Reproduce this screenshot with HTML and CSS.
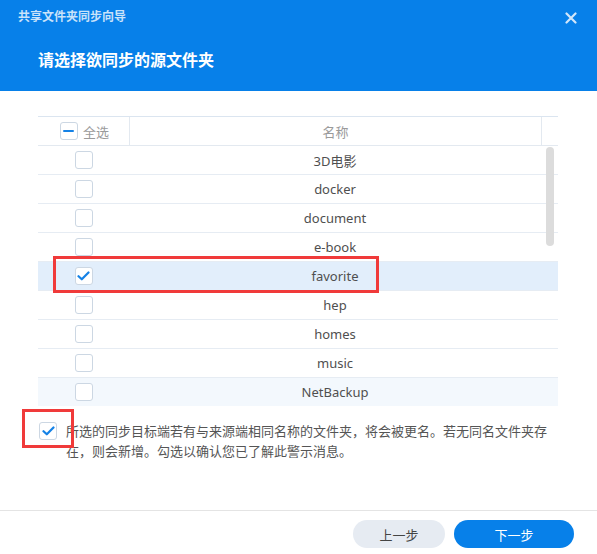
FILE: index.html
```html
<!DOCTYPE html>
<html lang="zh-CN">
<head>
  <meta charset="UTF-8" />
  <title>共享文件夹同步向导</title>
  <link rel="stylesheet" href="styles.css">
</head>
<body>
  <div class="dialog">
    <header class="wizard-head">
      <div class="top-bar">
        <span class="app-title">共享文件夹同步向导</span>
        <svg class="close" width="12" height="12" viewBox="0 0 12 12">
          <path d="M1.5 1.5L10.5 10.5M10.5 1.5L1.5 10.5" stroke="#d2e6fa" stroke-width="2.2" stroke-linecap="round"/>
        </svg>
      </div>
      <h1>请选择欲同步的源文件夹</h1>
    </header>

    <main class="content">
      <div class="grid">
        <div class="grid-head">
          <div class="cell sel-cell">
            <span class="box partial"><span class="dash"></span></span>
            <span class="sel-label">全选</span>
          </div>
          <div class="cell name-head">名称</div>
          <div class="cell gutter"></div>
        </div>
        <div class="grid-body">
          <div class="row"><div class="cell"><span class="box"></span></div><div class="cell name">3D电影</div><div></div></div>
          <div class="row"><div class="cell"><span class="box"></span></div><div class="cell name">docker</div><div></div></div>
          <div class="row"><div class="cell"><span class="box"></span></div><div class="cell name">document</div><div></div></div>
          <div class="row"><div class="cell"><span class="box"></span></div><div class="cell name">e-book</div><div></div></div>
          <div class="row selected">
            <div class="cell">
              <span class="box">
                <svg width="13" height="10" viewBox="0 0 13 10"><path d="M1.5 5.2L4.8 8.3L11.5 1.5" fill="none" stroke="#1582e6" stroke-width="2.2" stroke-linecap="round" stroke-linejoin="round"/></svg>
              </span>
            </div>
            <div class="cell name">favorite</div><div></div>
          </div>
          <div class="row"><div class="cell"><span class="box"></span></div><div class="cell name">hep</div><div></div></div>
          <div class="row"><div class="cell"><span class="box"></span></div><div class="cell name">homes</div><div></div></div>
          <div class="row"><div class="cell"><span class="box"></span></div><div class="cell name">music</div><div></div></div>
          <div class="row hover"><div class="cell"><span class="box"></span></div><div class="cell name">NetBackup</div><div></div></div>
          <div class="scrollbar"></div>
        </div>
      </div>

      <div class="notice">
        <span class="box">
          <svg width="13" height="10" viewBox="0 0 13 10"><path d="M1.5 5.2L4.8 8.3L11.5 1.5" fill="none" stroke="#1582e6" stroke-width="2.2" stroke-linecap="round" stroke-linejoin="round"/></svg>
        </span>
        <p>所选的同步目标端若有与来源端相同名称的文件夹，将会被更名。若无同名文件夹存在，则会新增。勾选以确认您已了解此警示消息。</p>
      </div>
    </main>

    <footer class="actions">
      <button class="btn btn-back">上一步</button>
      <button class="btn btn-next">下一步</button>
    </footer>

    <!-- annotation marks -->
    <div class="mark mark-row"></div>
    <div class="mark mark-check"></div>
  </div>
</body>
</html>
```

FILE: styles.css
```css
body {
  margin: 0;
  padding: 0;
  background: #fff;
  font-family: "Noto Sans", "Noto Sans CJK SC", sans-serif;
}

.dialog {
  position: relative;
  width: 597px;
  height: 554px;
  display: flex;
  flex-direction: column;
  overflow: hidden;
}

.wizard-head {
  background: #0780e9;
  height: 91px;
  padding: 9px 20px 0 18px;
  box-sizing: border-box;
}

.top-bar {
  display: flex;
  justify-content: space-between;
  align-items: center;
  height: 16px;
}

.app-title {
  font-size: 12px;
  line-height: 16px;
  font-weight: bold;
  color: rgba(255, 255, 255, 0.78);
}

.close {
  margin-top: 1px;
}

.wizard-head h1 {
  margin: 24px 0 0 20px;
  font-size: 16px;
  line-height: 22px;
  font-weight: bold;
  color: #fff;
}

.content {
  flex: 1;
  padding: 25px 39px 0 38px;
}

.grid {
  width: 520px;
}

.grid-head,
.row {
  display: grid;
  grid-template-columns: 91px 1fr 17px;
}

.grid-head {
  border-top: 1px solid #dbe5f0;
  border-bottom: 1px solid #e3e9f0;
  height: 28px;
}

.cell {
  display: flex;
  align-items: center;
  justify-content: center;
}

.grid-head .cell + .cell {
  border-left: 1px solid #e3e9f0;
}

.sel-cell {
  gap: 5px;
  padding-left: 2px;
}

.sel-label,
.name-head {
  font-size: 13px;
  color: #9a9a9a;
}

.grid-body {
  position: relative;
  height: 261px;
  overflow: hidden;
}

.row {
  height: 28px;
  border-bottom: 1px solid #e6ecf3;
}

.row .name {
  font-size: 13px;
  color: #4f4f4f;
}

.row.selected {
  background: #e2eefb;
}

.row.hover {
  background: #f3f8fd;
  border-bottom: none;
}

.box {
  width: 16px;
  height: 16px;
  border: 1px solid #ccd7e3;
  border-radius: 3px;
  background: #fff;
  display: flex;
  align-items: center;
  justify-content: center;
  flex-shrink: 0;
}

.dash {
  width: 11px;
  height: 2px;
  background: #1582e6;
  border-radius: 1px;
}

.scrollbar {
  position: absolute;
  left: 508px;
  top: 1px;
  width: 8px;
  height: 99px;
  border-radius: 4px;
  background: #dcdcdc;
}

.notice {
  display: flex;
  gap: 9px;
  margin-top: 14px;
  margin-left: 1px;
}

.notice .box {
  margin-top: 1px;
}

.notice p {
  margin: 0;
  font-size: 13px;
  line-height: 20px;
  color: #555;
  width: 484px;
}

.actions {
  border-top: 1px solid #e4e4e4;
  height: 44px;
  padding: 9px 23px 0 0;
  box-sizing: border-box;
  display: flex;
  justify-content: flex-end;
  gap: 9px;
  align-items: flex-start;
}

.btn {
  height: 28px;
  border: none;
  border-radius: 14px;
  font-family: inherit;
  font-size: 13px;
  cursor: pointer;
}

.btn-back {
  width: 92px;
  background: #e6ebf2;
  color: #444;
}

.btn-next {
  width: 120px;
  background: #0780e9;
  color: #fff;
}

.mark {
  position: absolute;
  border: 3px solid #f03a3a;
  box-sizing: border-box;
}

.mark-row {
  left: 53px;
  top: 256px;
  width: 326px;
  height: 37px;
}

.mark-check {
  left: 22px;
  top: 409px;
  width: 52px;
  height: 39px;
}
```
